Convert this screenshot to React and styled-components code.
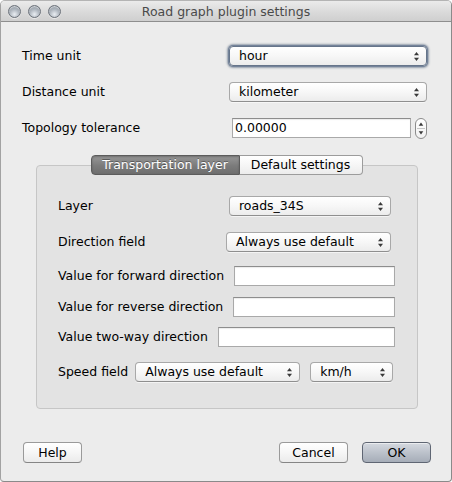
import React from "react";
import styled, { createGlobalStyle, css } from "styled-components";

const GlobalStyle = createGlobalStyle`
  html, body { margin: 0; padding: 0; background: #ffffff; }
  body { font-family: "DejaVu Sans", "Liberation Sans", sans-serif; font-size: 12.5px; color: #000; }
  * { box-sizing: border-box; }
`;

const Window = styled.div`
  width: 452px;
  height: 482px;
  background: #ececec;
  border: 1px solid #8a8a8a;
  border-top-color: #b4b4b4;
  border-left-color: #a2a2a2;
  border-radius: 5px 5px 4px 4px;
  display: flex;
  flex-direction: column;
  overflow: hidden;
`;

const TitleBar = styled.div`
  height: 21px;
  flex: none;
  display: flex;
  align-items: center;
  position: relative;
  background: linear-gradient(#ebebeb, #d9d9d9 60%, #cfcfcf);
  border-bottom: 1px solid #8e8e8e;
  padding-left: 7px;
`;

const Lights = styled.div`
  display: flex;
  gap: 7px;
  align-items: center;
`;

const Light = styled.span`
  width: 13px;
  height: 13px;
  border-radius: 50%;
  background: radial-gradient(circle at 50% 75%, #e9edf2 0%, #b3bac2 45%, #7f8791 100%);
  border: 1px solid #6c727a;
  box-shadow: inset 0 1px 1px rgba(255, 255, 255, 0.6), 0 1px 0 rgba(255, 255, 255, 0.5);
`;

const Title = styled.div`
  position: absolute;
  left: 0;
  right: 0;
  top: 0;
  bottom: 0;
  display: flex;
  align-items: center;
  justify-content: center;
  color: #4a4a4a;
  pointer-events: none;
  padding-top: 1px;
`;

const Content = styled.div`
  flex: 1;
  display: flex;
  flex-direction: column;
  padding: 24px 20px 0 21px;
`;

const TopForm = styled.div`
  display: grid;
  grid-template-columns: 1fr 198px;
  grid-auto-rows: 20px;
  row-gap: 16px;
  padding-right: 4px;
  align-items: center;
`;

const Label = styled.span`
  white-space: nowrap;
  line-height: 20px;
`;

const ComboBox = styled.div`
  height: 20px;
  width: ${(p) => (p.$width ? `${p.$width}px` : "auto")};
  flex: ${(p) => (p.$grow ? 1 : "none")};
  margin-left: ${(p) => p.$ml || 0}px;
  display: flex;
  align-items: center;
  justify-content: space-between;
  padding: 0 6px 0 9px;
  background: linear-gradient(#ffffff, #f7f7f7 50%, #ececec);
  border: 1px solid #a8a8a8;
  border-bottom-color: #8f8f8f;
  border-radius: 4px;
  box-shadow: 0 1px 0 rgba(255, 255, 255, 0.6);
  ${(p) =>
    p.$focused &&
    css`
      border-color: #66758a;
      box-shadow: 0 0 0 1px #74839a, 0 0 2px 2px rgba(90, 106, 130, 0.6);
    `}
`;

const ComboText = styled.span`
  white-space: nowrap;
  line-height: 18px;
`;

const Arrows = () => (
  <svg width="7" height="11" viewBox="0 0 7 11">
    <path d="M3.5 1 L6 4.2 L1 4.2 Z" fill="#3a3a3a" />
    <path d="M3.5 10 L6 6.8 L1 6.8 Z" fill="#3a3a3a" />
  </svg>
);

const Combo = ({ children, ...rest }) => (
  <ComboBox {...rest}>
    <ComboText>{children}</ComboText>
    <Arrows />
  </ComboBox>
);

const LineEdit = styled.div`
  height: 20px;
  flex: ${(p) => (p.$grow ? 1 : "none")};
  width: ${(p) => (p.$width ? `${p.$width}px` : "auto")};
  background: #ffffff;
  border: 1px solid #a9a9a9;
  border-top-color: #8d8d8d;
  box-shadow: inset 0 1px 1px rgba(0, 0, 0, 0.08);
  padding-left: 2px;
  line-height: 18px;
  white-space: nowrap;
`;

const SpinRow = styled.div`
  display: flex;
  align-items: center;
  gap: 4px;
  padding-left: 3px;
  height: 20px;
`;

const Spinner = styled.div`
  width: 12px;
  height: 21px;
  border-radius: 6px;
  border: 1px solid #8c8c8c;
  background: linear-gradient(#ffffff, #f1f1f1);
  display: flex;
  flex-direction: column;
  align-items: center;
  justify-content: center;
  margin-top: 1px;
`;

const SpinArrows = () => (
  <svg width="10" height="19" viewBox="0 0 10 19">
    <path d="M5 3.5 L7.3 6.8 L2.7 6.8 Z" fill="#3a3a3a" />
    <line x1="1" y1="9.5" x2="9" y2="9.5" stroke="#c4c4c4" strokeWidth="1" />
    <path d="M5 15.5 L7.3 12.2 L2.7 12.2 Z" fill="#3a3a3a" />
  </svg>
);

const TabWidget = styled.div`
  margin: 17px 13px 0 14px;
  display: flex;
  flex-direction: column;
`;

const TabBar = styled.div`
  display: flex;
  justify-content: center;
  position: relative;
  z-index: 1;
  height: 20px;
  padding-right: 1px;
`;

const Tab = styled.div`
  height: 20px;
  display: flex;
  align-items: center;
  justify-content: center;
  width: ${(p) => p.$width}px;
  white-space: nowrap;
  line-height: 18px;
  ${(p) =>
    p.$active
      ? css`
          background: linear-gradient(#979797, #7b7b7b 55%, #6e6e6e);
          border: 1px solid #5c5c5c;
          border-radius: 4px 0 0 4px;
          color: #ffffff;
          text-shadow: 0 -1px 0 rgba(0, 0, 0, 0.35);
          box-shadow: inset 0 1px 2px rgba(0, 0, 0, 0.25);
        `
      : css`
          background: linear-gradient(#ffffff, #f6f6f6 50%, #ececec);
          border: 1px solid #9c9c9c;
          border-left: none;
          border-radius: 0 4px 4px 0;
          color: #000;
        `}
`;

const Panel = styled.div`
  margin-top: -10px;
  height: 244px;
  background: #e3e3e3;
  border: 1px solid #c6c6c6;
  border-radius: 4px;
  padding: 30px 22px 0 21px;
  display: flex;
  flex-direction: column;
`;

const Row = styled.div`
  display: flex;
  align-items: center;
  height: 20px;
  margin-top: ${(p) => p.$mt || 0}px;
  gap: ${(p) => p.$gap || 10}px;
  padding-right: ${(p) => p.$pr || 0}px;
  justify-content: ${(p) => (p.$between ? "space-between" : "flex-start")};
`;

const ButtonRow = styled.div`
  margin-top: 33px;
  display: flex;
  align-items: center;
  height: 21px;
  padding-left: 1px;
`;

const Spacer = styled.div`
  flex: 1;
`;

const Button = styled.div`
  height: 21px;
  width: ${(p) => p.$width}px;
  display: flex;
  align-items: center;
  justify-content: center;
  border-radius: 4px;
  margin-left: ${(p) => p.$ml || 0}px;
  line-height: 19px;
  ${(p) =>
    p.$default
      ? css`
          background: linear-gradient(#d5d9e0, #bcc2cb 50%, #a6adb8);
          border: 1px solid #5f6673;
          box-shadow: inset 0 1px 0 rgba(255, 255, 255, 0.5);
        `
      : css`
          background: linear-gradient(#ffffff, #f6f6f6 50%, #ebebeb);
          border: 1px solid #9a9a9a;
          border-bottom-color: #858585;
        `}
`;

export default function App() {
  return (
    <>
      <GlobalStyle />
      <Window>
        <TitleBar>
          <Lights>
            <Light />
            <Light />
            <Light />
          </Lights>
          <Title>Road graph plugin settings</Title>
        </TitleBar>
        <Content>
          <TopForm>
            <Label>Time unit</Label>
            <Combo $focused>hour</Combo>
            <Label>Distance unit</Label>
            <Combo>kilometer</Combo>
            <Label>Topology tolerance</Label>
            <SpinRow>
              <LineEdit $grow>0.00000</LineEdit>
              <Spinner>
                <SpinArrows />
              </Spinner>
            </SpinRow>
          </TopForm>

          <TabWidget>
            <TabBar>
              <Tab $active $width={149}>Transportation layer</Tab>
              <Tab $width={123}>Default settings</Tab>
            </TabBar>
            <Panel>
              <Row $between $pr={4}>
                <Label>Layer</Label>
                <Combo $width={162}>roads_34S</Combo>
              </Row>
              <Row $between $mt={16} $pr={4}>
                <Label>Direction field</Label>
                <Combo $width={165}>Always use default</Combo>
              </Row>
              <Row $mt={14}>
                <Label>Value for forward direction</Label>
                <LineEdit $grow />
              </Row>
              <Row $mt={11}>
                <Label>Value for reverse direction</Label>
                <LineEdit $grow />
              </Row>
              <Row $mt={10}>
                <Label>Value two-way direction</Label>
                <LineEdit $grow />
              </Row>
              <Row $mt={15} $gap={7}>
                <Label>Speed field</Label>
                <Combo $width={165}>Always use default</Combo>
                <Combo $width={83} $ml={3}>km/h</Combo>
              </Row>
            </Panel>
          </TabWidget>

          <ButtonRow>
            <Button $width={59}>Help</Button>
            <Spacer />
            <Button $width={69}>Cancel</Button>
            <Button $width={69} $ml={14} $default>
              OK
            </Button>
          </ButtonRow>
        </Content>
      </Window>
    </>
  );
}
